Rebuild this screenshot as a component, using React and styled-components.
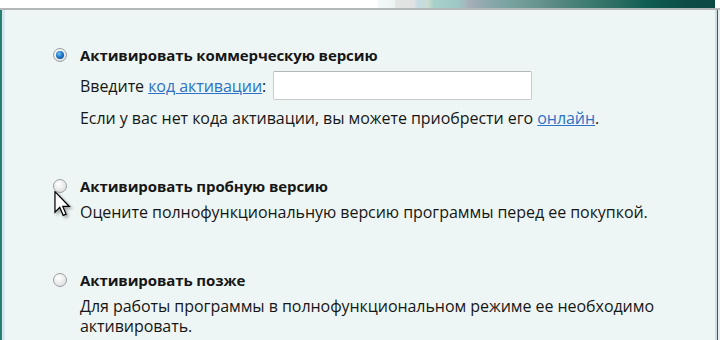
import React from "react";
import styled, { createGlobalStyle } from "styled-components";

const Global = createGlobalStyle`
  html, body { margin: 0; padding: 0; }
  body { width: 720px; height: 340px; overflow: hidden; background: #eef6f5; }
`;

const Window = styled.div`
  width: 720px;
  height: 340px;
  display: flex;
  flex-direction: column;
  overflow: hidden;
  position: relative;
  font-family: "Open Sans", "Noto Sans", sans-serif;
  color: #161616;
  box-sizing: border-box;
`;

const Header = styled.div`
  height: 8px;
  display: flex;
  background: #ffffff;
  border-bottom: 2px solid #b4b8b8;
  padding-left: 5px;
  padding-right: 5px;
`;

const HeaderBlank = styled.div`
  flex: 0 0 373px;
  background: #ffffff;
`;

const HeaderArt = styled.div`
  flex: 1;
  background: linear-gradient(
    90deg,
    #f2f7f7 0px,
    #eef4f4 16px,
    #e2e4e4 18px,
    #e0e2e2 36px,
    #c4dbe6 40px,
    #cbdcd0 50px,
    #a6d0c8 56px,
    #9ec8c4 80px,
    #a6aeb8 92px,
    #8aa8ad 110px,
    #76a19d 135px,
    #64918a 165px,
    #4e8379 190px,
    #3a7a6e 215px,
    #2a6c61 240px,
    #0f5c52 270px,
    #0c4c46 310px,
    #0b4a44 100%
  );
`;

const Body = styled.div`
  flex: 1;
  display: flex;
`;

const LeftFrame = styled.div`
  width: 5px;
  background: linear-gradient(90deg, #1e7a6a 0, #2a8a78 2px, #cfe3ea 2px, #dbeaee 5px);
`;

const RightFrame = styled.div`
  width: 5px;
  background: linear-gradient(90deg, #d4e2e8 0, #c8d8e0 2px, #5c5f60 2px, #4a4d4e 3px, #e8eeee 3px);
`;

const Content = styled.div`
  flex: 1;
  background: #eef6f5;
  padding: 35px 0 0 48px;
  display: flex;
  flex-direction: column;
  gap: 48px;
`;

const Option = styled.div`
  display: grid;
  grid-template-columns: 14px 1fr;
  column-gap: 13px;
  align-items: start;
`;

const Radio = styled.span`
  width: 14px;
  height: 14px;
  margin-top: 3px;
  border-radius: 50%;
  box-sizing: border-box;
  border: 1px solid #9aa0a3;
  background: radial-gradient(circle at 40% 35%, #ffffff 0, #f0f0f0 40%, #d2d4d6 100%);
  display: flex;
  align-items: center;
  justify-content: center;
  &::after {
    content: "";
    display: ${(p) => (p.$checked ? "block" : "none")};
    width: 8px;
    height: 8px;
    border-radius: 50%;
    background: radial-gradient(circle at 40% 35%, #7ac8f4 0, #1f78c8 45%, #0a3e7a 100%);
  }
`;

const Title = styled.div`
  font-size: 15px;
  font-weight: 700;
  line-height: 20px;
  letter-spacing: -0.1px;
`;

const Details = styled.div`
  grid-column: 2;
  display: flex;
  flex-direction: column;
  margin-top: ${(p) => p.$mt || 6}px;
  gap: ${(p) => p.$gap || 0}px;
`;

const Text = styled.div`
  font-size: 16px;
  line-height: 20px;
  letter-spacing: -0.05px;
`;

const InputRow = styled.div`
  display: flex;
  align-items: center;
  gap: 7px;
`;

const Input = styled.input`
  width: 259px;
  height: 29px;
  box-sizing: border-box;
  border: 1px solid #c8cccd;
  border-top-color: #b3b7b9;
  border-radius: 2px;
  background: #ffffff;
  outline: none;
  padding: 0 4px;
`;

const Link = styled.a`
  color: #2d72c6;
  text-decoration: underline;
  cursor: pointer;
`;

const Cursor = styled.svg`
  position: absolute;
  left: 54px;
  top: 191px;
  filter: drop-shadow(2px 2px 1.5px rgba(0, 0, 0, 0.35));
`;

export default function App() {
  return (
    <>
      <Global />
      <Window>
        <Header>
          <HeaderBlank />
          <HeaderArt />
        </Header>
        <Body>
          <LeftFrame />
          <Content>
            <Option>
              <Radio $checked />
              <Title>Активировать коммерческую версию</Title>
              <Details $mt={6} $gap={8}>
                <InputRow>
                  <Text>
                    Введите <Link>код активации</Link>:
                  </Text>
                  <Input />
                </InputRow>
                <Text>
                  Если у вас нет кода активации, вы можете приобрести его <Link>онлайн</Link>.
                </Text>
              </Details>
            </Option>
            <Option>
              <Radio />
              <Title>Активировать пробную версию</Title>
              <Details $mt={6}>
                <Text>Оцените полнофункциональную версию программы перед ее покупкой.</Text>
              </Details>
            </Option>
            <Option>
              <Radio />
              <Title>Активировать позже</Title>
              <Details $mt={6}>
                <Text>
                  Для работы программы в полнофункциональном режиме ее необходимо
                  <br />
                  активировать.
                </Text>
              </Details>
            </Option>
          </Content>
          <RightFrame />
        </Body>
        <Cursor width="17" height="26" viewBox="0 0 12 19">
          <path
            d="M0.5 0.5 L0.5 15.5 L4 12 L6.5 17.8 L8.6 16.9 L6.2 11.3 L11 11.3 Z"
            fill="#ffffff"
            stroke="#000000"
            strokeWidth="0.9"
            strokeLinejoin="miter"
          />
        </Cursor>
      </Window>
    </>
  );
}
